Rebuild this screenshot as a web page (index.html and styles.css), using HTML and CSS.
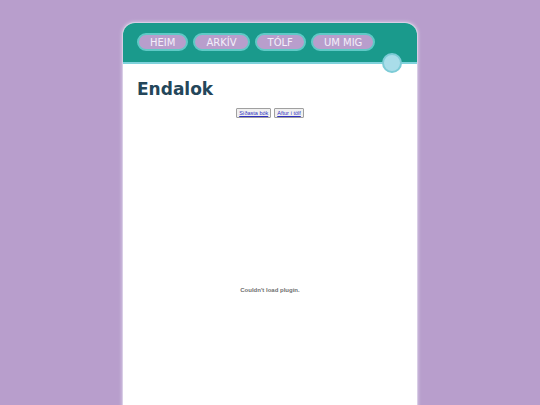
FILE: index.html
```html
<!DOCTYPE html>
<html>
<head>
<meta charset="utf-8">
<link rel="stylesheet" href="styles.css">
</head>
<body>
<div class="card">
  <div class="header">
    <nav class="nav">
      <a class="pill">HEIM</a>
      <a class="pill">ARKÍV</a>
      <a class="pill">TÓLF</a>
      <a class="pill">UM MIG</a>
    </nav>
    <span class="dot"></span>
  </div>
  <div class="content">
    <h1 class="title">Endalok</h1>
    <div class="btns">
      <button class="mini">Síðasta bók</button>
      <button class="mini">Aftur í tölf</button>
    </div>
    <div class="plugin">Couldn't load plugin.</div>
  </div>
</div>
</body>
</html>
```
FILE: styles.css
```css
html, body {
  margin: 0;
  padding: 0;
  background: #b89ecc;
  height: 100%;
  overflow: hidden;
}
body {
  font-family: "DejaVu Sans", Verdana, sans-serif;
}
.card {
  width: 294px;
  margin: 23px auto 0;
  background: #ffffff;
  border-radius: 12px 12px 0 0;
  height: 400px;
  box-shadow: 0 0 0 1px #d9cde6, 0 0 3px 2px #cbbcdc;
}
.header {
  position: relative;
  height: 39px;
  background: #1a9a8c;
  border-radius: 12px 12px 0 0;
  border-bottom: 2px solid #7fd2dc;
  box-sizing: content-box;
}
.nav {
  display: flex;
  gap: 5px;
  padding: 10px 0 0 14px;
}
.pill {
  display: flex;
  align-items: center;
  justify-content: center;
  height: 18px;
  box-sizing: border-box;
  padding: 0 11px;
  border: 2px solid #5fc9c6;
  border-radius: 10px;
  background: #b89ecc;
  color: #f4eefa;
  font-size: 10px;
}
.dot {
  position: absolute;
  right: 15px;
  top: 30px;
  width: 20px;
  height: 20px;
  box-sizing: border-box;
  border-radius: 50%;
  background: #a9dde9;
  border: 2px solid #7ccbd6;
}
.content {
  padding: 15px 14px 0;
}
.title {
  margin: 0;
  font-size: 17px;
  font-weight: bold;
  color: #24465a;
  line-height: 20px;
}
.btns {
  display: flex;
  justify-content: center;
  gap: 3px;
  margin-top: 9px;
}
.mini {
  font-family: "Liberation Sans", Arial, sans-serif;
  font-size: 5.5px;
  color: #3030c0;
  text-decoration: underline;
  background: #f0f0f0;
  border: 1px solid #a0a0a0;
  border-radius: 1px;
  padding: 1px 2px;
  height: 10px;
  line-height: 6px;
}
.plugin {
  margin-top: 169px;
  text-align: center;
  font-family: "Liberation Sans", Arial, sans-serif;
  font-size: 6px;
  font-weight: bold;
  color: #6f6f6f;
}
```
